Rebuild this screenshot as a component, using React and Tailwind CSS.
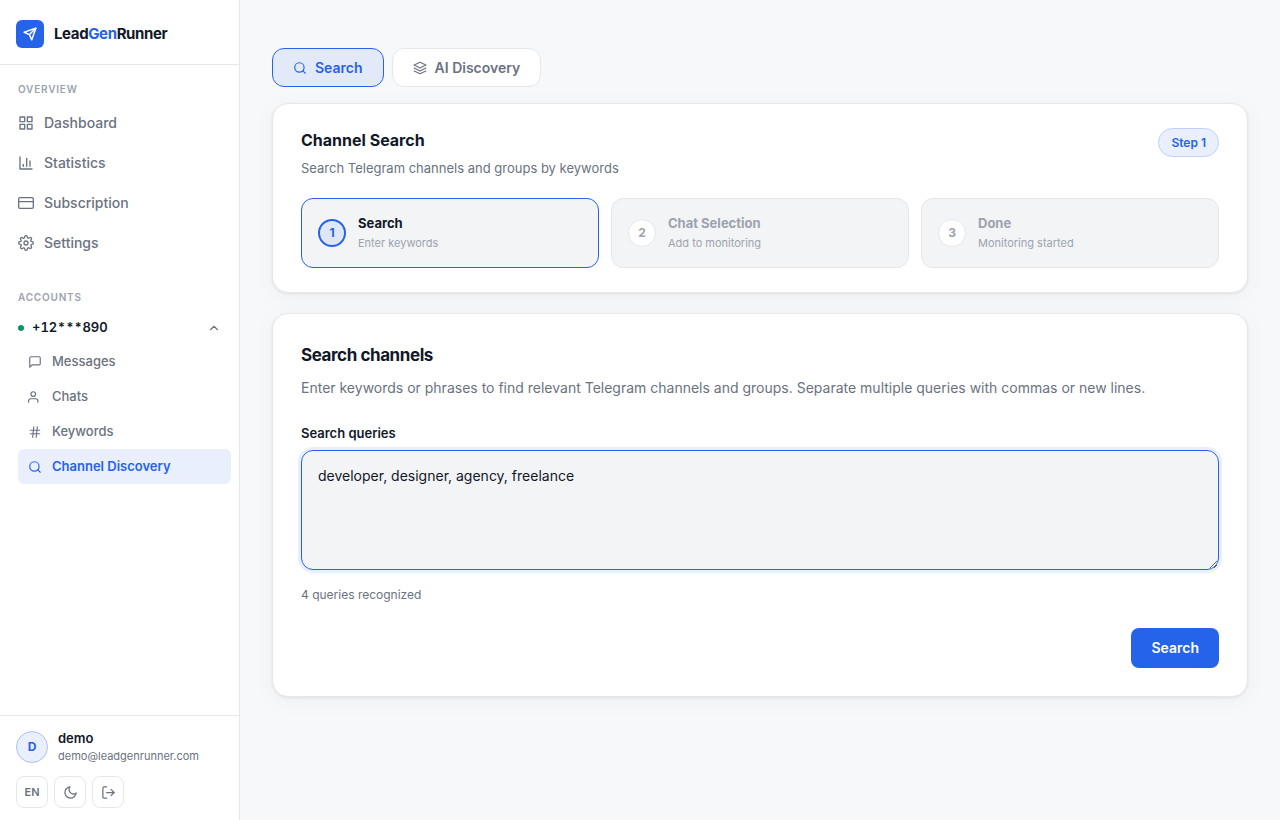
import { useState } from "react";

function Icon({ className = "size-4", children, strokeWidth = 2 }) {
  return (
    <svg
      className={`shrink-0 ${className}`}
      viewBox="0 0 24 24"
      fill="none"
      stroke="currentColor"
      strokeWidth={strokeWidth}
      strokeLinecap="round"
      strokeLinejoin="round"
      aria-hidden="true"
    >
      {children}
    </svg>
  );
}

const glyphs = {
  send: <><path d="M22 2 11 13" /><path d="m22 2-7 20-4-9-9-4Z" /></>,
  grid: (
    <>
      <rect x="3" y="3" width="7" height="7" />
      <rect x="14" y="3" width="7" height="7" />
      <rect x="14" y="14" width="7" height="7" />
      <rect x="3" y="14" width="7" height="7" />
    </>
  ),
  chart: <><path d="M3 3v18h18" /><path d="M18 17V9" /><path d="M13 17V5" /><path d="M8 17v-3" /></>,
  card: <><rect x="1" y="4" width="22" height="16" rx="2" /><path d="M1 10h22" /></>,
  gear: (
    <>
      <circle cx="12" cy="12" r="3" />
      <path d="M19.4 15a1.65 1.65 0 0 0 .33 1.82l.06.06a2 2 0 1 1-2.83 2.83l-.06-.06a1.65 1.65 0 0 0-2.8 1.17V21a2 2 0 0 1-4 0v-.09A1.65 1.65 0 0 0 9 19.4a1.65 1.65 0 0 0-1.82.33l-.06.06a2 2 0 1 1-2.83-2.83l.06-.06A1.65 1.65 0 0 0 3.17 14H3a2 2 0 0 1 0-4h.09A1.65 1.65 0 0 0 4.6 9a1.65 1.65 0 0 0-.33-1.82l-.06-.06a2 2 0 1 1 2.83-2.83l.06.06A1.65 1.65 0 0 0 9 4.6a1.65 1.65 0 0 0 1-1.51V3a2 2 0 0 1 4 0v.09a1.65 1.65 0 0 0 2.82 1.18l.06-.06a2 2 0 1 1 2.83 2.83l-.06.06A1.65 1.65 0 0 0 19.4 9a1.65 1.65 0 0 0 1.51 1H21a2 2 0 0 1 0 4h-.09a1.65 1.65 0 0 0-1.51 1z" />
    </>
  ),
  message: <path d="M21 15a2 2 0 0 1-2 2H7l-4 4V5a2 2 0 0 1 2-2h14a2 2 0 0 1 2 2z" />,
  person: <><path d="M17 21v-2a4 4 0 0 0-4-4H5a4 4 0 0 0-4 4v2" /><circle cx="9" cy="7" r="4" /></>,
  hash: <><path d="M4 9h16" /><path d="M4 15h16" /><path d="M10 3 8 21" /><path d="m16 3-2 18" /></>,
  search: <><circle cx="11" cy="11" r="8" /><path d="m21 21-4.35-4.35" /></>,
  layers: <><path d="m12 2 10 5-10 5L2 7Z" /><path d="m2 17 10 5 10-5" /><path d="m2 12 10 5 10-5" /></>,
  chevronUp: <path d="m18 15-6-6-6 6" />,
  moon: <path d="M21 12.79A9 9 0 1 1 11.21 3 7 7 0 0 0 21 12.79z" />,
  logout: <><path d="M9 21H5a2 2 0 0 1-2-2V5a2 2 0 0 1 2-2h4" /><path d="m16 17 5-5-5-5" /><path d="M21 12H9" /></>,
};

const mainNav = [
  { label: "Dashboard", icon: "grid" },
  { label: "Statistics", icon: "chart" },
  { label: "Subscription", icon: "card" },
  { label: "Settings", icon: "gear" },
];

const accountNav = [
  { label: "Messages", icon: "message" },
  { label: "Chats", icon: "person" },
  { label: "Keywords", icon: "hash" },
  { label: "Channel Discovery", icon: "search", active: true },
];

const steps = [
  { title: "Search", note: "Enter keywords", active: true },
  { title: "Chat Selection", note: "Add to monitoring" },
  { title: "Done", note: "Monitoring started" },
];

function Sidebar() {
  const [open, setOpen] = useState(true);
  const small =
    "flex size-8 items-center justify-center rounded-lg border border-[#e5e7eb] bg-white text-[11px] font-semibold text-[#6b7280]";
  return (
    <aside className="sticky top-0 flex h-screen w-60 shrink-0 flex-col border-r border-[#e5e7eb] bg-white">
      <div className="flex items-center gap-[10px] border-b border-[#e5e7eb] px-4 pt-5 pb-4">
        <span className="flex size-7 items-center justify-center rounded-md bg-[#2563eb] text-white">
          <Icon className="size-[14px]" strokeWidth={2.5}>{glyphs.send}</Icon>
        </span>
        <span className="text-[15px] leading-6 font-bold tracking-tight">
          Lead<span className="text-[#2563eb]">Gen</span>Runner
        </span>
      </div>

      <nav className="min-h-0 flex-1 overflow-y-auto px-2 pt-4">
        <h2 className="px-[10px] text-[10px] leading-4 font-semibold tracking-[0.08em] text-[#9ca3af] uppercase">Overview</h2>
        <ul className="mt-[6px]">
          {mainNav.map((item) => (
            <li key={item.label}>
              <a href="#" className="flex h-10 items-center gap-[10px] rounded-md px-[10px] text-sm font-medium text-[#6b7280]">
                <Icon>{glyphs[item.icon]}</Icon>
                {item.label}
              </a>
            </li>
          ))}
        </ul>

        <h2 className="mt-[26px] px-[10px] text-[10px] leading-4 font-semibold tracking-[0.08em] text-[#9ca3af] uppercase">Accounts</h2>
        <button
          type="button"
          aria-expanded={open}
          onClick={() => setOpen(!open)}
          className="mt-[7px] flex h-8 w-full items-center gap-2 px-[10px] text-[13px] font-semibold tabular-nums"
        >
          <span className="size-[6px] rounded-full bg-[#059669]" />
          +12***890
          <Icon className={open ? "ml-auto size-[14px] text-[#6b7280]" : "ml-auto size-[14px] rotate-180 text-[#6b7280]"}>
            {glyphs.chevronUp}
          </Icon>
        </button>
        {open && (
          <ul className="pl-[10px]">
            {accountNav.map((item) => (
              <li key={item.label}>
                <a
                  href="#"
                  aria-current={item.active ? "page" : undefined}
                  className={
                    item.active
                      ? "flex h-[35px] items-center gap-[10px] rounded-md bg-[#e9effd] px-[10px] text-[13px] font-semibold text-[#2563eb]"
                      : "flex h-[35px] items-center gap-[10px] rounded-md px-[10px] text-[13px] font-medium text-[#6b7280]"
                  }
                >
                  <Icon className="size-[14px]">{glyphs[item.icon]}</Icon>
                  {item.label}
                </a>
              </li>
            ))}
          </ul>
        )}
      </nav>

      <div className="border-t border-[#e5e7eb] px-4 py-3">
        <div className="flex items-center gap-[10px]">
          <span className="flex size-8 items-center justify-center rounded-full border border-[#a8c1f7] bg-[#e9effd] text-xs font-bold text-[#2563eb]">
            D
          </span>
          <div>
            <div className="text-[13px] leading-5 font-semibold">demo</div>
            <div className="text-[11px] leading-[17px] text-[#6b7280]">demo@leadgenrunner.com</div>
          </div>
        </div>
        <div className="mt-[11px] flex gap-[6px]">
          <button type="button" aria-label="EN, language" className={small}>EN</button>
          <button type="button" aria-label="Toggle theme" className={small}>
            <Icon className="size-[15px]">{glyphs.moon}</Icon>
          </button>
          <button type="button" aria-label="Log out" className={small}>
            <Icon className="size-[15px]">{glyphs.logout}</Icon>
          </button>
        </div>
      </div>
    </aside>
  );
}

function Step({ index, title, note, active }) {
  return (
    <li
      className={
        active
          ? "flex items-center gap-3 rounded-xl border border-[#2563eb] bg-[#f3f4f6] px-4 py-[14px]"
          : "flex items-center gap-3 rounded-xl border border-[#e5e7eb] bg-[#f3f4f6] px-4 py-[14px]"
      }
    >
      <span
        className={
          active
            ? "flex size-7 shrink-0 items-center justify-center rounded-full border-2 border-[#2563eb] bg-[#dfe6f5] text-xs font-bold text-[#2563eb]"
            : "flex size-7 shrink-0 items-center justify-center rounded-full border border-[#e5e7eb] bg-white text-xs font-bold text-[#9ca3af]"
        }
      >
        {index}
      </span>
      <div className="pb-px">
        <div className={active ? "text-[13px] leading-5 font-bold" : "text-[13px] leading-5 font-bold text-[#9ca3af]"}>
          {title}
        </div>
        <div className="mt-[2px] text-[11px] leading-[17px] text-[#9ca3af]">{note}</div>
      </div>
    </li>
  );
}

const card =
  "rounded-2xl border border-[#e5e7eb] bg-white shadow-[0_1px_3px_rgba(0,0,0,0.08),0_4px_24px_rgba(0,0,0,0.04)]";

export default function App() {
  const [tab, setTab] = useState("Search");
  const [text, setText] = useState("developer, designer, agency, freelance");
  const count = text.split(/[,\n]/).filter((part) => part.trim()).length;
  const tabs = [
    { label: "Search", icon: "search" },
    { label: "AI Discovery", icon: "layers" },
  ];

  return (
    <div className="flex min-h-screen bg-[#f7f8fa] font-['Inter',sans-serif] text-[#111827]">
      <Sidebar />
      <main className="min-w-0 flex-1 px-8 py-12">
        <div className="flex gap-2">
          {tabs.map((item) => (
            <button
              key={item.label}
              type="button"
              aria-pressed={tab === item.label}
              onClick={() => setTab(item.label)}
              className={
                tab === item.label
                  ? "flex h-[39px] items-center gap-2 rounded-xl border border-[#2563eb] bg-[#e2e9f8] px-5 text-sm font-semibold text-[#2563eb]"
                  : "flex h-[39px] items-center gap-2 rounded-xl border border-[#e5e7eb] bg-white px-5 text-sm font-semibold text-[#6b7280]"
              }
            >
              <Icon className="size-[14px]">{glyphs[item.icon]}</Icon>
              {item.label}
            </button>
          ))}
        </div>

        <section className={`mt-4 px-7 py-6 ${card}`}>
          <div className="flex items-start justify-between gap-4">
            <div>
              <h1 className="text-base leading-6 font-bold">Channel Search</h1>
              <p className="mt-[6px] text-[13px] leading-5 text-[#6b7280]">Search Telegram channels and groups by keywords</p>
            </div>
            <span className="rounded-full border border-[#bfd1fa] bg-[#e9effd] px-3 py-1 text-xs leading-[19px] font-semibold text-[#2563eb]">
              Step 1
            </span>
          </div>
          <ol className="mt-5 grid grid-cols-3 gap-3">
            {steps.map((step, i) => (
              <Step key={step.title} index={i + 1} {...step} />
            ))}
          </ol>
        </section>

        <section className={`mt-5 p-7 ${card}`}>
          <h2 className="text-[17px] leading-[27px] font-bold tracking-tight">Search channels</h2>
          <p className="mt-2 text-sm leading-[22px] text-[#6b7280]">
            Enter keywords or phrases to find relevant Telegram channels and groups. Separate multiple queries with commas or new lines.
          </p>
          <label htmlFor="queries" className="mt-6 block text-[13px] leading-[21px] font-semibold">
            Search queries
          </label>
          <textarea
            id="queries"
            value={text}
            onChange={(event) => setText(event.target.value)}
            className="mt-[6px] block h-[120px] w-full resize-y rounded-xl border border-[#2563eb] bg-[#f3f4f6] px-4 py-[14px] text-sm leading-[22px] ring-3 ring-[#2563eb]/10 outline-none"
          />
          <p className="mt-4 text-xs leading-[18px] text-[#6b7280]">{count} queries recognized</p>
          <div className="mt-6 flex justify-end">
            <button type="button" className="h-10 rounded-lg bg-[#2563eb] px-5 text-sm font-semibold text-white">
              Search
            </button>
          </div>
        </section>
      </main>
    </div>
  );
}
